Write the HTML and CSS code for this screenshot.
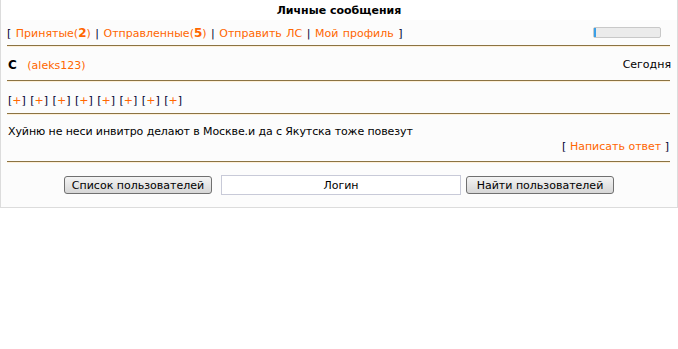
FILE: index.html
```html
<!DOCTYPE html>
<html lang="ru">
<head>
    <meta charset="UTF-8">
    <title>Личные сообщения</title>
    <link rel="stylesheet" href="styles.css">
</head>
<body>
    <div class="pm-box">
        <div class="pm-title">Личные сообщения</div>
        <div class="pm-body">
            <div class="pm-nav">
                <div class="pm-links">
                    [ <a href="#">Принятые(<b>2</b>)</a> | <a href="#">Отправленные(<b>5</b>)</a> | <a href="#">Отправить ЛС</a> | <a href="#">Мой профиль</a> ]
                </div>
                <div class="pm-quota"><div class="pm-quota-fill"></div></div>
            </div>
            <div class="pm-sep"></div>
            <div class="pm-head">
                <div><b class="pm-subject">С</b> &nbsp; <a href="#">(aleks123)</a></div>
                <div>Сегодня</div>
            </div>
            <div class="pm-sep"></div>
            <div class="pm-tools">
                [<a href="#">+</a>] [<a href="#">+</a>] [<a href="#">+</a>] [<a href="#">+</a>] [<a href="#">+</a>] [<a href="#">+</a>] [<a href="#">+</a>] [<a href="#">+</a>]
            </div>
            <div class="pm-sep"></div>
            <div class="pm-text">Хуйню не неси инвитро делают в Москве.и да с Якутска тоже повезут</div>
            <div class="pm-reply">[ <a href="#">Написать ответ</a> ]</div>
            <div class="pm-sep"></div>
            <form class="pm-search">
                <button type="button">Список пользователей</button>
                <input type="text" value="Логин">
                <button type="submit">Найти пользователей</button>
            </form>
        </div>
    </div>
</body>
</html>
```
FILE: styles.css
```css
body {
    margin: 0;
    font-family: "DejaVu Sans", Verdana, sans-serif;
    font-size: 11px;
    color: #000;
    background: #fff;
}
a {
    color: #ff6600;
    text-decoration: none;
}
.pm-box {
    width: 676px;
    border: 1px solid #dcdcdc;
    border-top: none;
}
.pm-title {
    text-align: center;
    font-weight: bold;
    height: 20px;
    line-height: 21px;
    background: #fff;
}
.pm-body {
    background: #fcfcfc;
    padding: 0 6px 12px 6px;
}
.pm-nav {
    display: flex;
    justify-content: space-between;
    align-items: center;
    height: 25px;
    color: #000033;
}
.pm-links {
    word-spacing: 1px;
}
.pm-links b {
    font-size: 12px;
}
.pm-quota {
    width: 66px;
    height: 9px;
    margin-right: 10px;
    background: #ebebeb;
    border: 1px solid #c8c8c8;
    border-radius: 2px;
}
.pm-quota-fill {
    width: 2px;
    height: 100%;
    background: #3aa0e8;
}
.pm-sep {
    height: 1px;
    background: #8b7343;
    border-bottom: 1px solid #fff0d8;
    margin-right: 1px;
}
.pm-head {
    display: flex;
    justify-content: space-between;
    align-items: center;
    height: 31px;
    padding: 2px 0 0 1px;
}
.pm-subject {
    font-size: 12px;
}
.pm-tools {
    height: 31px;
    line-height: 38px;
    padding-left: 1px;
    word-spacing: 1px;
    color: #000033;
}
.pm-text {
    padding: 9px 0 0 1px;
    line-height: 15px;
    letter-spacing: -0.1px;
}
.pm-reply {
    text-align: right;
    line-height: 16px;
    padding-right: 2px;
    margin-bottom: 6px;
    color: #000033;
}
.pm-search {
    display: flex;
    justify-content: center;
    align-items: center;
    gap: 9px;
    margin-top: 12px;
}
.pm-search button {
    width: 148px;
    height: 18px;
    padding: 0;
    font-family: inherit;
    font-size: 11px;
    color: #000;
    background: linear-gradient(#f4f4f4, #d6d6d6);
    border: 1px solid #707070;
    border-radius: 3px;
}
.pm-search input {
    width: 240px;
    height: 20px;
    box-sizing: border-box;
    padding: 0;
    margin-right: -4px;
    font-family: inherit;
    font-size: 11px;
    text-align: center;
    border: 1px solid #c8cad8;
    background: #fff;
}
```
